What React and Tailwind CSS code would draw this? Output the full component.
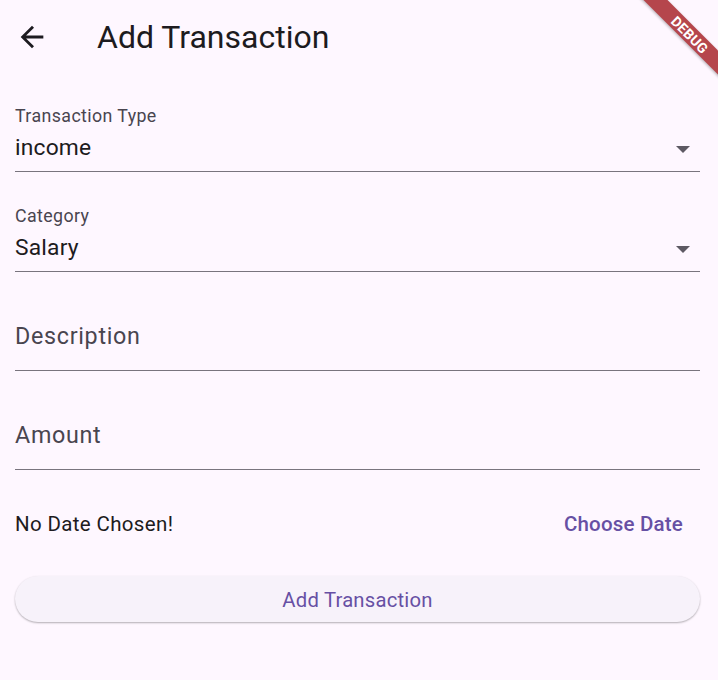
import React from 'react';

function ArrowBack() {
  return (
    <svg viewBox="0 0 24 24" className="w-[34px] h-[34px]" fill="#1D1B20">
      <path d="M20 11H7.83l5.59-5.59L12 4l-8 8 8 8 1.41-1.41L7.83 13H20v-2z" />
    </svg>
  );
}

function Caret() {
  return (
    <svg viewBox="0 0 14 7" className="w-[14px] h-[7px]" fill="#5d5963">
      <path d="M0 0h14L7 7z" />
    </svg>
  );
}

function DropdownField({ label, value }) {
  return (
    <div className="border-b border-[#79747E] pb-[10px]">
      <div className="text-[17.8px] leading-[20px] text-[#49454F] tracking-[0.4px]">{label}</div>
      <div className="flex items-center justify-between h-[26px] mt-[9px]">
        <span className="text-[22.8px] leading-[26px] text-[#1D1B20] tracking-[0.2px]">{value}</span>
        <span className="mr-[10px] mt-[2px]"><Caret /></span>
      </div>
    </div>
  );
}

function TextField({ hint }) {
  return (
    <div className="border-b border-[#79747E] pt-[51px] pb-[21px]">
      <div className="text-[23.3px] leading-[26px] text-[#49454F] tracking-[0.7px]">{hint}</div>
    </div>
  );
}

export default function App() {
  return (
    <div
      className="relative w-[718px] h-[680px] overflow-hidden bg-[#FEF7FF]"
      style={{ fontFamily: 'Roboto, sans-serif' }}
    >
      <div className="h-[74px] flex items-center">
        <button className="ml-[15px] w-[34px] h-[34px] flex items-center justify-center">
          <ArrowBack />
        </button>
        <h1 className="ml-[48px] text-[32px] text-[#1D1B20] leading-none">Add Transaction</h1>
      </div>

      <div className="pl-[15px] pr-[18px] pt-[32px]">
        <DropdownField label="Transaction Type" value="income" />
        <div className="h-[34px]" />
        <DropdownField label="Category" value="Salary" />
        <TextField hint="Description" />
        <TextField hint="Amount" />

        <div className="flex items-center justify-between mt-[42px] h-[24px]">
          <span className="text-[20.5px] leading-[24px] text-[#1D1B20] tracking-[0.35px]">No Date Chosen!</span>
          <button className="mr-[17px] text-[20.5px] leading-[24px] font-medium text-[#6750A4] tracking-[0.2px]">Choose Date</button>
        </div>

        <button className="mt-[40px] w-full h-[46px] pt-[3px] rounded-full bg-[#F7F2FA] shadow-[0_1px_2px_rgba(0,0,0,0.3)] text-[20.3px] text-[#6750A4] tracking-[0.2px]">
          Add Transaction
        </button>
      </div>

      <div className="absolute left-[620px] top-[26px] w-[140px] h-[17px] rotate-45 bg-[#b5464c] shadow-[0_1px_3px_rgba(0,0,0,0.3)] flex items-center justify-center">
        <span className="text-white font-bold text-[14px] leading-none tracking-[0.2px]">DEBUG</span>
      </div>
    </div>
  );
}
